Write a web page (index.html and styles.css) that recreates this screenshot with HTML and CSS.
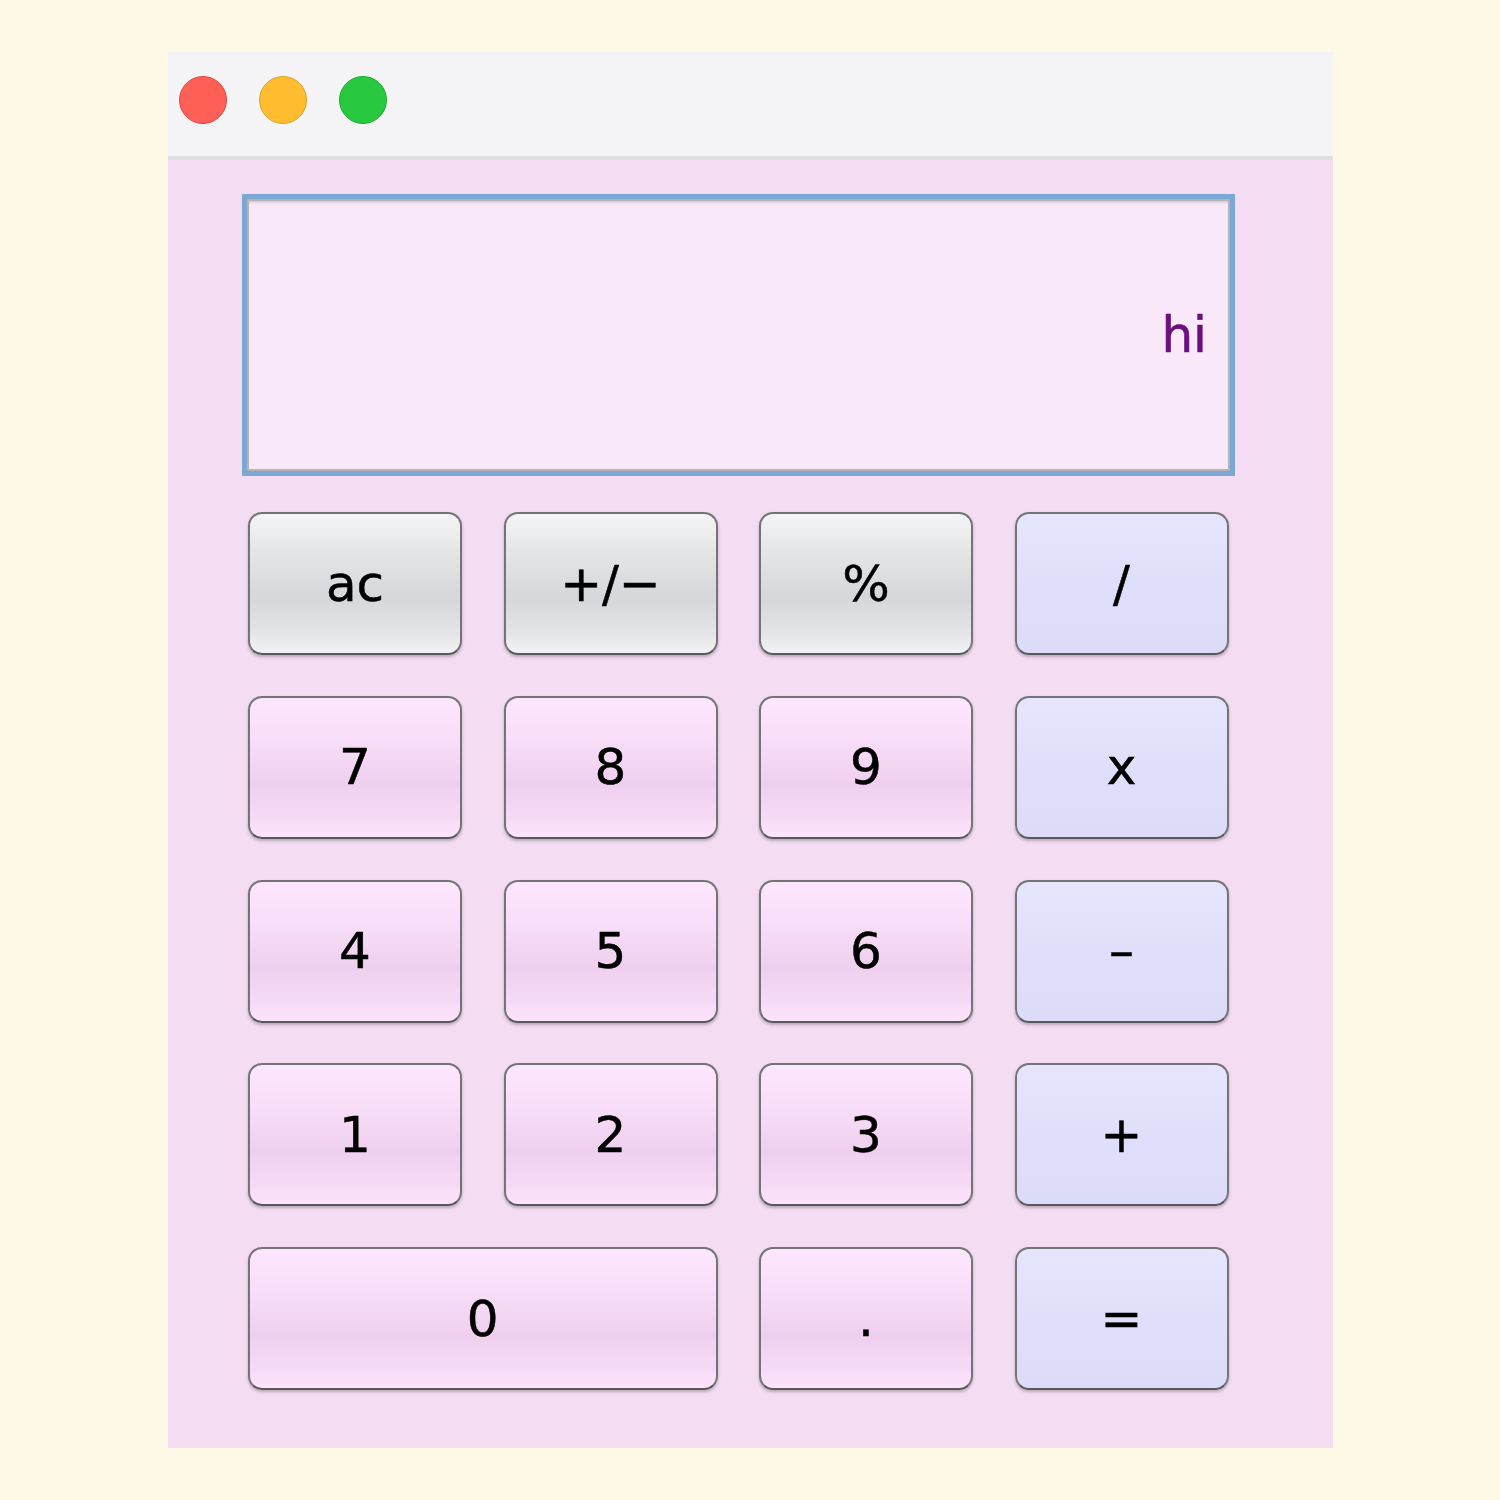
FILE: index.html
```html
<!DOCTYPE html>
<html>
<head>
<meta charset="utf-8">
<link rel="stylesheet" href="styles.css">
</head>
<body>
<div class="window">
  <div class="titlebar">
    <span class="light red"></span>
    <span class="light yellow"></span>
    <span class="light green"></span>
  </div>
  <div class="content">
    <div class="display"><span class="display-text">hi</span></div>
    <div class="keys">
      <button class="key gray">ac</button>
      <button class="key gray">+/−</button>
      <button class="key gray">%</button>
      <button class="key blue">/</button>
      <button class="key pink">7</button>
      <button class="key pink">8</button>
      <button class="key pink">9</button>
      <button class="key blue">x</button>
      <button class="key pink">4</button>
      <button class="key pink">5</button>
      <button class="key pink">6</button>
      <button class="key blue">–</button>
      <button class="key pink">1</button>
      <button class="key pink">2</button>
      <button class="key pink">3</button>
      <button class="key blue">+</button>
      <button class="key pink wide">0</button>
      <button class="key pink">.</button>
      <button class="key blue">=</button>
    </div>
  </div>
</div>
</body>
</html>
```

FILE: styles.css
```css
html, body {
  margin: 0;
  padding: 0;
  background: #fef8e6;
}
body {
  font-family: "DejaVu Sans", "Liberation Sans", sans-serif;
}
.window {
  margin: 52px 0 0 168px;
  width: 1165px;
  height: 1396px;
  display: flex;
  flex-direction: column;
}
.titlebar {
  height: 108px;
  box-sizing: border-box;
  background: #f4f4f6;
  border-bottom: 4px solid #e0e0e4;
  display: flex;
  align-items: flex-start;
  gap: 32px;
  padding: 24px 0 0 11px;
}
.light {
  width: 48px;
  height: 48px;
  border-radius: 50%;
  box-sizing: border-box;
}
.red { background: #fe5f57; border: 1px solid #e2463f; }
.yellow { background: #febc2e; border: 1px solid #e0a023; }
.green { background: #28c840; border: 1px solid #1dad2b; }

.content {
  flex: 1;
  background: #f4dcf2;
  padding: 34px 0 0 74px;
}
.display {
  box-sizing: border-box;
  width: 993px;
  height: 282px;
  border: 5px solid #7ba7d3;
  box-shadow: inset 0 0 0 2px #b6b2ba, inset 0 3px 3px rgba(120,110,120,0.35);
  background: #f8e8f8;
  display: flex;
  align-items: center;
  justify-content: flex-end;
  padding-right: 23px;
}
.display-text {
  color: #6b0f7e;
  font-size: 50px;
  line-height: 1;
  -webkit-text-stroke: 0.6px #6b0f7e;
}
.keys {
  margin: 36px 0 0 6px;
  display: grid;
  grid-template-columns: repeat(4, 214px);
  grid-auto-rows: 143px;
  column-gap: 41.5px;
  row-gap: 40.75px;
}
.key {
  box-sizing: border-box;
  border: 2px solid #747478;
  border-bottom-color: #58585c;
  border-radius: 14px;
  box-shadow: 0 2px 3px rgba(60,50,60,0.3);
  font-family: "DejaVu Sans", "Liberation Sans", sans-serif;
  font-size: 50px;
  color: #000;
  -webkit-text-stroke: 0.5px #000;
  padding: 0;
  display: flex;
  align-items: center;
  justify-content: center;
}
.key.wide { grid-column: span 2; }
.gray {
  background: linear-gradient(to bottom, #f3f4f6 0%, #e2e4e6 30%, #d5d7da 60%, #e2e4e7 85%, #f1f2f4 100%);
}
.pink {
  background: linear-gradient(to bottom, #fde7fd 0%, #f8def8 30%, #efcfee 62%, #f6daf5 85%, #fce4fb 100%);
}
.blue {
  background: linear-gradient(to bottom, #e5e5fd 0%, #dfdffb 50%, #dcdcf9 100%);
}
```
